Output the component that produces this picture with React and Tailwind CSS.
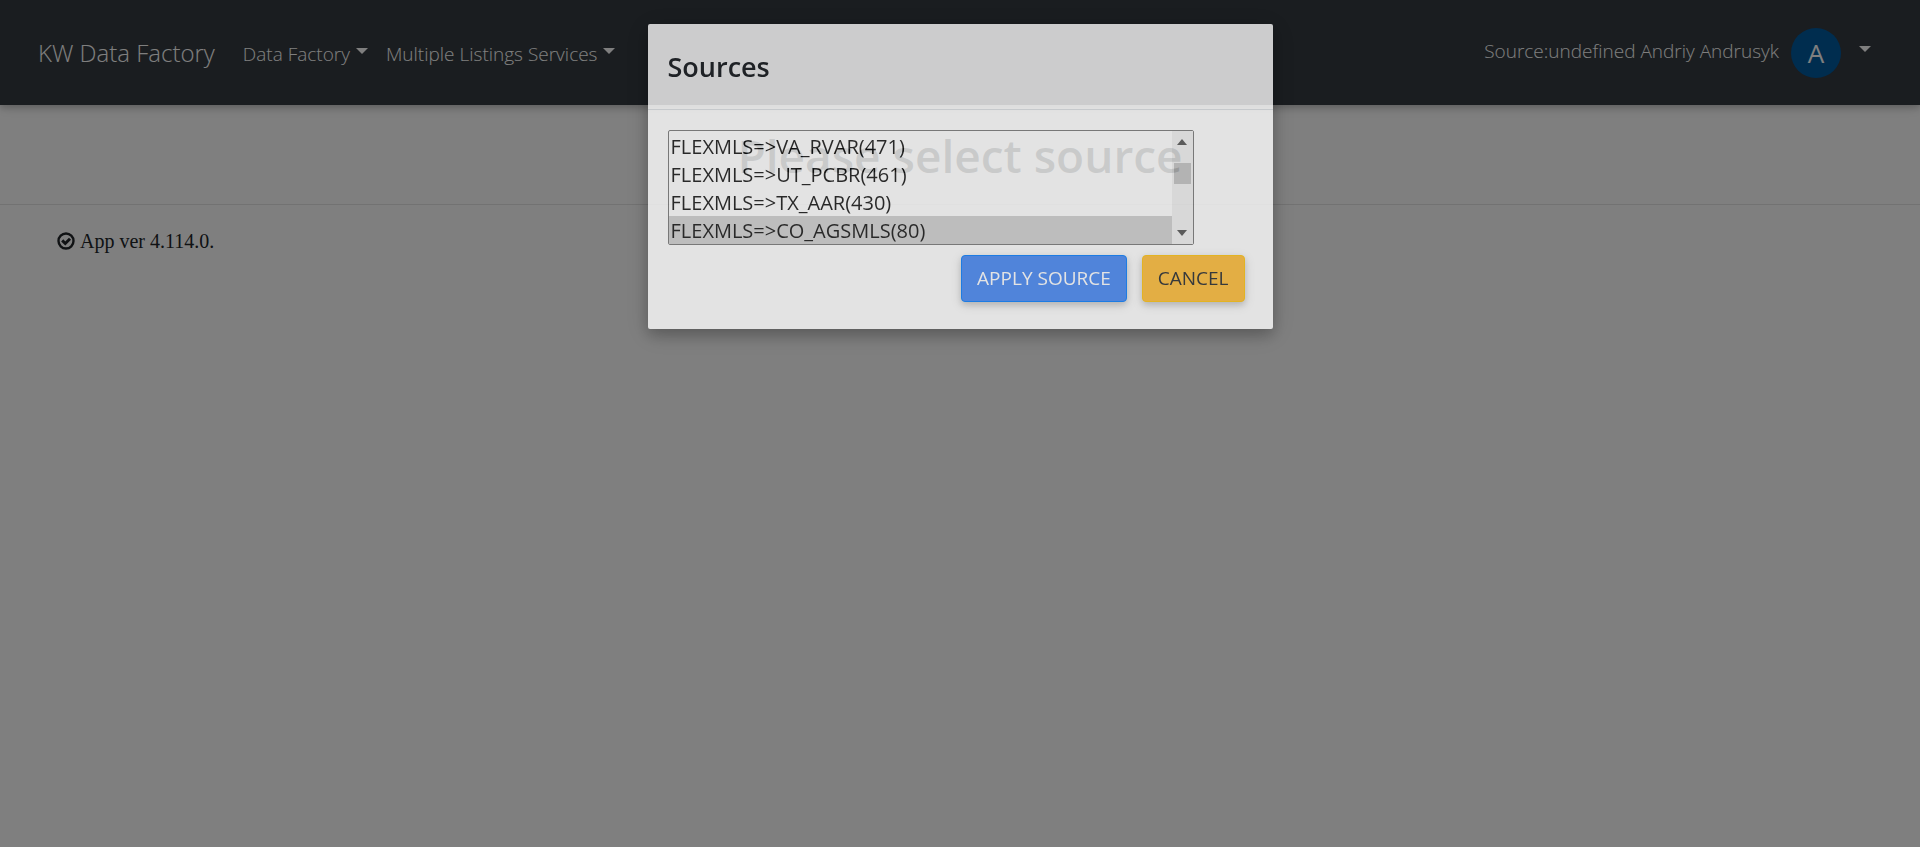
import React from "react";

const sources = [
  "FLEXMLS=>VA_RVAR(471)",
  "FLEXMLS=>UT_PCBR(461)",
  "FLEXMLS=>TX_AAR(430)",
  "FLEXMLS=>CO_AGSMLS(80)",
];

function Caret() {
  return (
    <span
      aria-hidden="true"
      className="inline-block h-0 w-0 border-x-6 border-t-6 border-x-transparent border-t-current"
    />
  );
}

function Navbar() {
  return (
    <header className="relative flex h-[105px] items-center bg-[#343a40] pr-[49px] pl-[38px] font-light text-white shadow-[0_3px_6px_rgba(0,0,0,0.16),0_3px_12px_rgba(0,0,0,0.12)]">
      <a href="#home" className="text-2xl leading-8">
        KW Data Factory
      </a>
      <nav className="ml-7 flex items-center gap-[18px] pt-0.5 text-[19px] leading-8">
        <button type="button" className="flex items-center gap-1.5">
          Data Factory
          <span className="flex pb-1.5"><Caret /></span>
        </button>
        <button type="button" className="flex items-center gap-1.5">
          Multiple Listings Services
          <span className="flex pb-1.5"><Caret /></span>
        </button>
      </nav>
      <button type="button" className="ml-auto flex items-center text-[19px] leading-7">
        <span className="pb-1">Source:undefined Andriy Andrusyk</span>
        <span className="ml-3 flex size-[50px] items-center justify-center rounded-full bg-[#005a9f] text-[26px] font-normal">
          A
        </span>
        <span className="ml-4.5 flex pb-2"><Caret /></span>
      </button>
    </header>
  );
}

function CheckCircle() {
  return (
    <svg viewBox="0 0 18 18" className="size-[18px]" fill="none" stroke="currentColor" aria-hidden="true">
      <circle cx="9" cy="9" r="7.5" strokeWidth="2.4" />
      <path d="M5.2 8.4 8.3 11.5 13 6.8" strokeWidth="3" />
    </svg>
  );
}

function SourceList() {
  return (
    <div className="flex w-[526px] max-w-full rounded-xs border border-[#767676] bg-white">
      <select
        size={4}
        aria-label="Sources"
        defaultValue={sources[3]}
        className="h-[113px] min-w-0 flex-1 appearance-none overflow-hidden bg-transparent pt-px text-xl leading-7 text-[#101010] outline-none"
      >
        {sources.map((s) => (
          <option
            key={s}
            value={s}
            className="h-7 px-0.5 pt-px pb-0 leading-7 checked:bg-[#cecece] checked:bg-linear-to-r checked:from-[#cecece] checked:to-[#cecece]"
          >
            {s}
          </option>
        ))}
      </select>
      <div aria-hidden="true" className="flex w-[21px] flex-col items-center bg-[#f1f1f1] py-2 text-[#505050]">
        <svg viewBox="0 0 10 6" className="h-1.5 w-2.5" fill="currentColor"><path d="M0 6 5 0l5 6z" /></svg>
        <div className="mt-[18px] h-[21px] w-[17px] bg-[#c1c1c1]" />
        <svg viewBox="0 0 10 6" className="mt-auto h-1.5 w-2.5" fill="currentColor"><path d="M0 0h10L5 6z" /></svg>
      </div>
    </div>
  );
}

function SourcesDialog() {
  return (
    <div className="fixed inset-0 flex items-start justify-center bg-black/50 pt-6">
      <section
        role="dialog"
        aria-modal="true"
        aria-labelledby="dialog-title"
        className="w-full max-w-[625px] rounded-xs bg-white opacity-[0.775] shadow-[0_6px_14px_rgba(0,0,0,0.25),0_5px_24px_rgba(0,0,0,0.22)]"
      >
        <div className="border-b border-[#dee2e6] px-5 pt-6 pb-6">
          <h4 id="dialog-title" className="text-[27px] leading-[37px] font-semibold text-[#212529]">
            Sources
          </h4>
        </div>
        <div className="px-5 pt-5 pb-[27px]">
          <SourceList />
          <div className="mt-2.5 flex justify-end gap-[15px] pr-2">
            <button
              type="button"
              className="h-[47px] rounded border border-[#007bff] bg-[#4285f4] px-[15px] text-[19px] text-white shadow-[0_3px_6px_rgba(0,0,0,0.16),0_3px_12px_rgba(0,0,0,0.12)]"
            >
              APPLY SOURCE
            </button>
            <button
              type="button"
              className="h-[47px] rounded border border-[#ffc107] bg-[#ffbb33] px-[15px] text-[19px] text-[#212529] shadow-[0_3px_6px_rgba(0,0,0,0.16),0_3px_12px_rgba(0,0,0,0.12)]"
            >
              CANCEL
            </button>
          </div>
        </div>
      </section>
    </div>
  );
}

export default function App() {
  return (
    <div className="min-h-screen bg-white font-['Open_Sans','Noto_Sans',sans-serif] text-[#212529]">
      <Navbar />
      <main>
        <h1 className="border-b border-black/10 pt-5 pb-[19px] text-center text-[46px] leading-[60px] font-semibold">
          Please select source
        </h1>
        <p className="flex items-center gap-[5px] px-[57px] pt-[22px] font-['Liberation_Serif',serif] text-xl leading-7">
          <CheckCircle />
          App ver 4.114.0.
        </p>
      </main>
      <SourcesDialog />
    </div>
  );
}
